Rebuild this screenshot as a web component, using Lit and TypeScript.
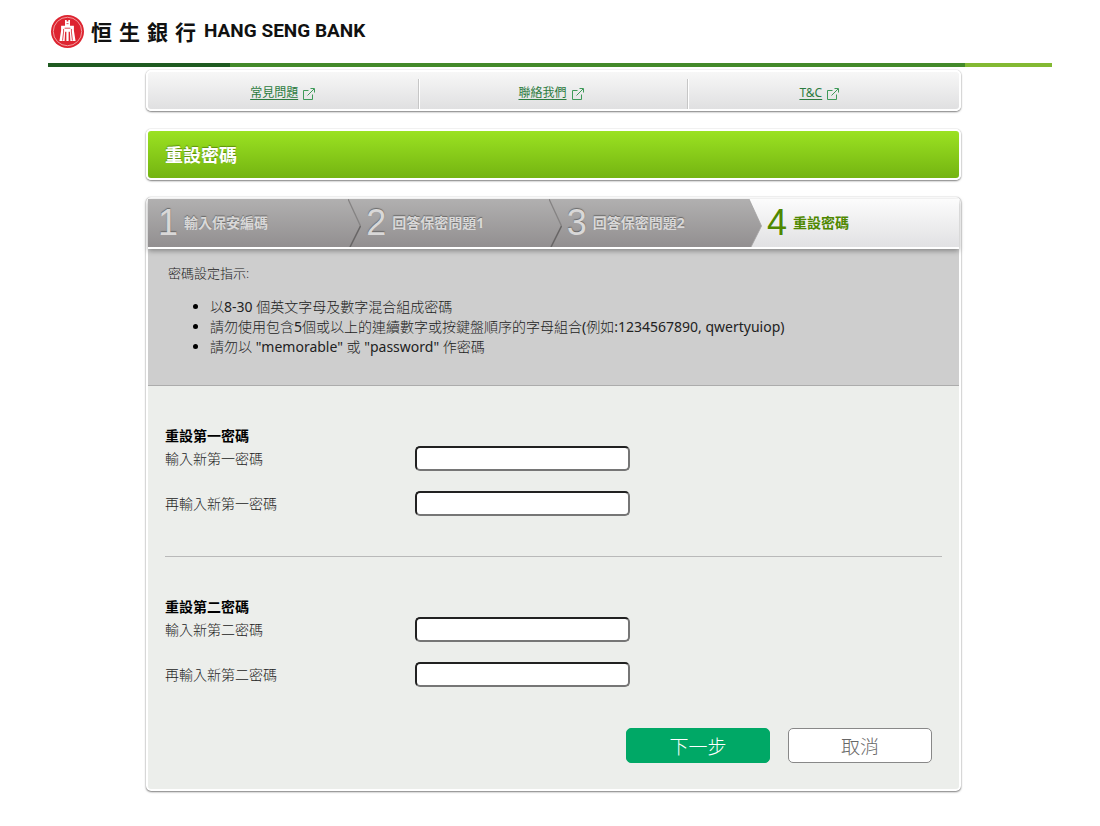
import { LitElement, html, svg, css } from "lit";
import { customElement } from "lit/decorators.js";

const LINKS = ["常見問題", "聯絡我們", "T&C"];
const STEPS = ["輸入保安編碼", "回答保密問題1", "回答保密問題2", "重設密碼"];
const RULES = [
  "以8-30 個英文字母及數字混合組成密碼",
  "請勿使用包含5個或以上的連續數字或按鍵盤順序的字母組合(例如:1234567890, qwertyuiop)",
  '請勿以 "memorable" 或 "password" 作密碼',
];
const GROUPS = [
  { id: "first", title: "重設第一密碼", fields: ["輸入新第一密碼", "再輸入新第一密碼"] },
  { id: "second", title: "重設第二密碼", fields: ["輸入新第二密碼", "再輸入新第二密碼"] },
];

// Latin runs are set a weight heavier than the thin Chinese strokes beside them.
const mixed = (text: string) =>
  text.split(/([!-~](?:[ -~]*[!-~])?)/).map((run, i) => (i % 2 ? html`<span class="latin">${run}</span>` : run));

const externalIcon = svg`<svg class="ext" viewBox="0 0 12 12" aria-hidden="true">
  <path d="M5.500 2.500H.5v9h9V6.500M4.500 7.500 11 1M7.500.5h4v4" />
</svg>`;

const emblem = svg`<svg class="emblem" viewBox="0 0 32 32" aria-hidden="true">
  <circle cx="16" cy="16" r="16" fill="#dd2430" />
  <circle cx="16" cy="16" r="13.800" fill="none" stroke="#f3a5a8" stroke-width=".9" />
  <path d="M13.600 4.800h1.600v1.400h1.600V4.800h1.600v5.700h3.800v4.500l1.600 10.200h-5l-.5-9h-1.200v9h-2.200v-9h-1.200l-.5 9h-5L9.800 15v-4.500h3.800z" fill="#fff" />
  <path d="M15 8.400h2M13.200 12.800h5.600M12.200 13.500v3l-1 8.300M19.800 13.500v3l1 8.300" fill="none" stroke="#dd2430" stroke-width=".8" />
</svg>`;

const chevron = (last: boolean) => svg`<svg class="chevron" viewBox="0 0 13 48" preserveAspectRatio="none" aria-hidden="true">
  <defs><linearGradient id="g" x1="0" y1="0" x2="0" y2="1">
    <stop offset="0" stop-color="#b1b0b0" /><stop offset="1" stop-color="#928f90" />
  </linearGradient></defs>
  <path d="M0 0 12.500 27 2 48H0z" fill="url(#g)" />
  ${last
    ? svg`<path d="M0 0 12.500 27 2 48" fill="none" stroke="#a3a2a2" stroke-width=".8" />`
    : svg`<path d="M0 0 12.500 27" fill="none" stroke="#858383" stroke-width="1.300" /><path d="M12.500 27 2 48" fill="none" stroke="#686666" stroke-width="1.600" />`}
</svg>`;

@customElement("app-root")
export class AppRoot extends LitElement {
  static styles = css`
    :host {
      display: block;
      background: #fff;
      color: #222;
      font: 14px/20px "Noto Sans", "Noto Sans CJK TC", sans-serif;
    }
    * { box-sizing: border-box; }
    h1, h2, p, ul, ol { margin: 0; padding: 0; }

    .head { padding: 14px 48px 0; }
    .brand { display: flex; align-items: center; height: 34px; padding-left: 3px; color: #111; }
    .emblem { width: 33px; height: 33px; margin-right: 7px; }
    .name-zh { display: flex; gap: 7px; font: 700 21px/30px "Noto Sans CJK TC", sans-serif; }
    .name-en { margin-left: 8px; font: 700 19px/32px Roboto, sans-serif; }
    .stripe { display: flex; height: 4px; margin-top: 15px; }
    .stripe-a { flex: 182; background: #1f5b21; }
    .stripe-b { flex: 735; background: #438a2a; }
    .stripe-c { flex: 87; background: #83b932; }

    .page { padding: 3px 0 34px 7px; }
    .wrap { display: flex; flex-direction: column; max-width: 815px; margin: 0 auto; }
    .card {
      border: 2px solid #fff;
      border-radius: 5px;
      box-shadow: 0 1px 2px rgba(0, 0, 0, 0.5), 0 0 1px rgba(0, 0, 0, 0.3);
    }

    .links { display: flex; height: 41px; padding: 0 4px 0 3px; background: linear-gradient(#f7f7f7, #e0e0e1); }
    .cell {
      display: flex; flex: 1 1 0; align-items: center; justify-content: center;
      margin-top: 7px; padding: 0 4px 3px 0; border-right: 1px solid #c6c6c6; box-shadow: 1px 0 #fff;
    }
    .cell:last-child { border: 0; box-shadow: none; }
    .link { display: flex; align-items: center; gap: 5px; color: #2c7b40; font-size: 12px; line-height: 18px; text-decoration: none; }
    .link-text { text-decoration: underline; text-underline-offset: 2px; }
    .ext { width: 12px; height: 12px; margin-top: 2px; fill: none; stroke: #3f9a59; }

    .banner { height: 51px; margin-top: 18px; padding: 0 17px; background: linear-gradient(#9be222, #74b411); }
    .title { color: #fff; font-size: 18px; font-weight: 700; line-height: 48px; text-shadow: 0 -1px 1px rgba(60, 100, 0, 0.6); }

    .panel { margin-top: 17px; background: #eceeeb; }
    .steps {
      display: grid; grid-template-columns: 24.7% 24.7% 24.7% 1fr; height: 50px;
      list-style: none; border-bottom: 2px solid #fff;
      background: linear-gradient(#fcfcfc, #e1e1e3);
      position: relative; box-shadow: 0 2px 5px rgba(0, 0, 0, 0.35);
    }
    .step {
      position: relative; display: flex; align-items: center; gap: 6px; padding-left: 18px;
      background: linear-gradient(#b1b0b0, #928f90); color: #d9d8d8;
      font-weight: 700; text-shadow: 0 -1px 1px rgba(80, 80, 80, 0.7);
    }
    .step:first-child { padding-left: 10px; }
    .step:last-child { background: none; color: #4f8800; text-shadow: none; }
    .num { font: 36px/48px "Liberation Sans", Arial, sans-serif; }
    .chevron { position: absolute; z-index: 1; left: 100%; top: 0; width: 13px; height: 100%; }

    .notes { padding: 14px 20px 28px; background: #cecece; border-bottom: 1px solid #acacac; }
    .notes-title { font-size: 13px; font-weight: 300; }
    .rules { margin-top: 14px; padding-left: 42px; font-weight: 300; }
    .rules li::marker { color: #000; }
    .latin { font-weight: 400; }

    .form { padding: 40px 17px 26px; }
    .group + .group { margin-top: 40px; padding-top: 40px; border-top: 1px solid #b9b9b9; }
    .group-title { color: #000; font-size: 14px; font-weight: 700; line-height: 20px; }
    .fields { display: grid; gap: 20px; }
    .field { display: grid; grid-template-columns: 250px minmax(0, 215px); align-items: center; font-weight: 300; }
    .input { width: 100%; height: 25px; padding: 1px 4px; border: 2px inset #767676; border-radius: 5px; background: #fff; font: inherit; }
    .actions { display: flex; justify-content: flex-end; gap: 18px; margin-top: 41px; padding-right: 10px; }
    .btn { width: 144px; height: 35px; padding: 0; border: 1px solid #888; border-radius: 5px; background: #fff; color: #666; font: 300 19px/30px "Noto Sans CJK TC", sans-serif; }
    .btn-main { border-color: #00a866; background: #00a866; color: #fff; }
  `;

  render() {
    return html`
      <header class="head">
        <div class="brand">
          ${emblem}
          <span class="name-zh">${[..."恒生銀行"].map((c) => html`<span>${c}</span>`)}</span>
          <span class="name-en">HANG SENG BANK</span>
        </div>
        <div class="stripe"><div class="stripe-a"></div><div class="stripe-b"></div><div class="stripe-c"></div></div>
      </header>
      <main class="page">
        <div class="wrap">
          <nav class="card links">
            ${LINKS.map((t) => html`<div class="cell"><a class="link" href="#"><span class="link-text">${t}</span>${externalIcon}</a></div>`)}
          </nav>
          <div class="card banner"><h1 class="title">重設密碼</h1></div>
          <div class="card panel">
            <ol class="steps">
              ${STEPS.map((t, i) => html`<li class="step"><span class="num">${i + 1}</span><span>${t}</span>${i < 3 ? chevron(i === 2) : ""}</li>`)}
            </ol>
            <section class="notes">
              <p class="notes-title">密碼設定指示:</p>
              <ul class="rules">${RULES.map((r) => html`<li>${mixed(r)}</li>`)}</ul>
            </section>
            <form class="form" @submit=${(e: Event) => e.preventDefault()}>
              ${GROUPS.map((g) => html`
                <section class="group">
                  <h2 class="group-title">${g.title}</h2>
                  <div class="fields">
                    ${g.fields.map((f, i) => html`
                      <div class="field">
                        <label for="${g.id}-${i}">${f}</label>
                        <input class="input" type="password" id="${g.id}-${i}" autocomplete="new-password" />
                      </div>`)}
                  </div>
                </section>`)}
              <div class="actions">
                <button class="btn btn-main" type="submit">下一步</button>
                <button class="btn" type="button">取消</button>
              </div>
            </form>
          </div>
        </div>
      </main>
    `;
  }
}
